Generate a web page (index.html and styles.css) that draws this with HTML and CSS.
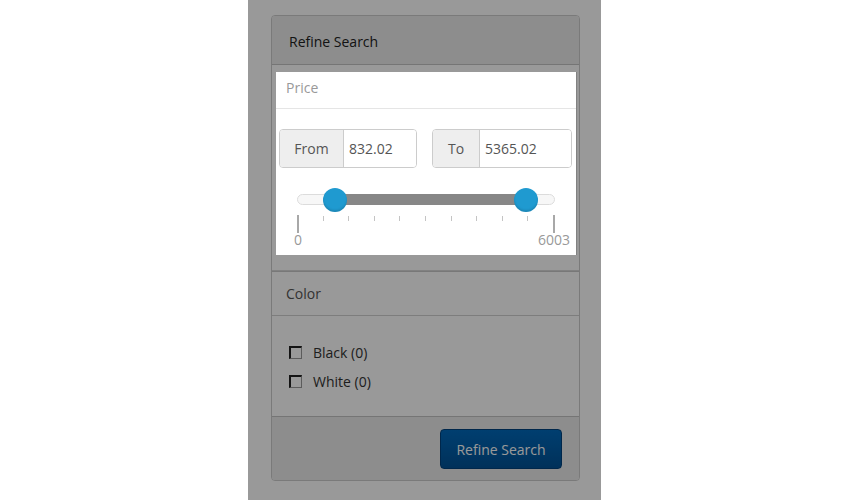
FILE: index.html
```html
<!DOCTYPE html>
<html lang="en">
<head>
    <meta charset="UTF-8">
    <title>Refine Search</title>
    <link rel="stylesheet" href="styles.css">
</head>
<body>
    <div class="page">
        <div class="panel">
            <div class="panel-heading">Refine Search</div>

            <div class="filter price-filter">
                <div class="highlight">
                    <div class="filter-title">Price</div>
                    <div class="range-inputs">
                        <div class="input-group group-from">
                            <span class="addon">From</span>
                            <input type="text" value="832.02">
                        </div>
                        <div class="input-group group-to">
                            <span class="addon">To</span>
                            <input type="text" value="5365.02">
                        </div>
                    </div>
                    <div class="slider">
                        <div class="track">
                            <div class="selection" style="left: 14.5%; width: 74.6%;"></div>
                            <span class="handle" style="left: 14.5%;"></span>
                            <span class="handle" style="left: 89.1%;"></span>
                        </div>
                        <div class="ticks">
                            <span class="tick big"></span>
                            <span class="tick"></span>
                            <span class="tick"></span>
                            <span class="tick"></span>
                            <span class="tick"></span>
                            <span class="tick"></span>
                            <span class="tick"></span>
                            <span class="tick"></span>
                            <span class="tick"></span>
                            <span class="tick"></span>
                            <span class="tick big"></span>
                        </div>
                        <div class="tick-labels">
                            <span>0</span>
                            <span>6003</span>
                        </div>
                    </div>
                </div>
            </div>

            <div class="filter color-filter">
                <div class="filter-title">Color</div>
                <div class="filter-body">
                    <label class="check"><span class="box"></span>Black (0)</label>
                    <label class="check"><span class="box"></span>White (0)</label>
                </div>
            </div>

            <div class="panel-footer">
                <button class="btn-refine">Refine Search</button>
            </div>
        </div>

        <!-- tour overlay -->
        <div class="overlay"></div>
    </div>
</body>
</html>
```

FILE: styles.css
```css
body {
    margin: 0;
    background: #fff;
    font-family: "Open Sans", "DejaVu Sans", sans-serif;
    font-size: 14px;
}

.page {
    position: relative;
    width: 353px;
    height: 500px;
    margin-left: 248px;
    padding-top: 15px;
    box-sizing: border-box;
    background: #fff;
}

.overlay {
    position: absolute;
    top: 0;
    left: 0;
    right: 0;
    bottom: 0;
    background: rgba(0, 0, 0, 0.4);
    z-index: 1;
}

.panel {
    margin: 0 21px 0 23px;
    border: 1px solid #ccc;
    border-radius: 4px;
    overflow: hidden;
}

.panel-heading {
    height: 48px;
    line-height: 51px;
    padding-left: 17px;
    background: #ebebeb;
    border-bottom: 1px solid #c4c4c4;
    color: #222;
}

.price-filter {
    padding: 7px 3px 15px 4px;
    border-bottom: 1px solid #d8d8d8;
}

.highlight {
    position: relative;
    z-index: 2;
    background: #fff;
    height: 183px;
    box-shadow: 1px 0 0 rgba(0, 0, 0, 0.15);
}

.filter-title {
    height: 36px;
    line-height: 32px;
    padding-left: 10px;
    color: #999;
    border-bottom: 1px solid #e5e5e5;
}

.range-inputs {
    display: flex;
    gap: 15px;
    padding: 20px 4px 0 3px;
}

.input-group {
    display: flex;
    height: 39px;
    border: 1px solid #ccc;
    border-radius: 4px;
    box-sizing: border-box;
    overflow: hidden;
}

.group-from { width: 138px; }
.group-to { width: 140px; }

.addon {
    display: flex;
    align-items: center;
    justify-content: center;
    background: #eee;
    border-right: 1px solid #ccc;
    color: #555;
}

.group-from .addon { width: 63px; }
.group-to .addon { width: 46px; }

.input-group input {
    flex: 1;
    min-width: 0;
    border: none;
    padding: 0 5px;
    font-family: inherit;
    font-size: 14px;
    color: #555;
    outline: none;
}

.slider {
    padding: 26px 21px 0;
}

.track {
    position: relative;
    height: 11px;
    background: #f7f7f7;
    border: 1px solid #dcdcdc;
    border-radius: 6px;
    box-sizing: border-box;
}

.selection {
    position: absolute;
    top: -1px;
    bottom: -1px;
    background: #878787;
}

.handle {
    position: absolute;
    top: 50%;
    width: 24px;
    height: 24px;
    margin: -12px 0 0 -12px;
    border-radius: 50%;
    background: #1f9ad0;
    box-shadow: inset 0 -2px 2px rgba(0, 0, 0, 0.12);
}

.ticks {
    display: flex;
    justify-content: space-between;
    align-items: flex-start;
    width: 258px;
    height: 18px;
    margin-top: 10px;
}

.tick {
    width: 2px;
    height: 5px;
    margin-top: 1px;
    background: linear-gradient(to right, #c4c4c4 50%, transparent 50%);
}

.tick.big {
    height: 18px;
    margin-top: 0;
    background: #a8a8a8;
}

.tick-labels {
    display: flex;
    justify-content: space-between;
    width: 258px;
    height: 14px;
    line-height: 14px;
    font-size: 14px;
    color: #999;
}

.tick-labels span {
    display: flex;
    justify-content: center;
    width: 2px;
}

.color-filter .filter-title {
    height: 43px;
    line-height: 44px;
    padding-left: 14px;
    color: #555;
    border-top: 1px solid #c8c8c8;
    border-bottom: 1px solid #d0d0d0;
}

.filter-body {
    padding: 22px 17px 20px;
    border-bottom: 1px solid #c4c4c4;
}

.check {
    display: flex;
    align-items: center;
    height: 29px;
    color: #333;
}

.box {
    width: 13px;
    height: 13px;
    margin-right: 11px;
    box-sizing: border-box;
    border-top: 2px solid #222;
    border-left: 2px solid #222;
    border-right: 1px solid #999;
    border-bottom: 1px solid #999;
}

.panel-footer {
    display: flex;
    justify-content: flex-end;
    padding: 12px 17px 11px;
    background: #ebebeb;
}

.btn-refine {
    width: 122px;
    height: 40px;
    border: 1px solid #00427d;
    border-radius: 4px;
    background: linear-gradient(#0069bb, #005296);
    color: #fff;
    font-family: inherit;
    font-size: 14px;
    padding: 0;
}
```
